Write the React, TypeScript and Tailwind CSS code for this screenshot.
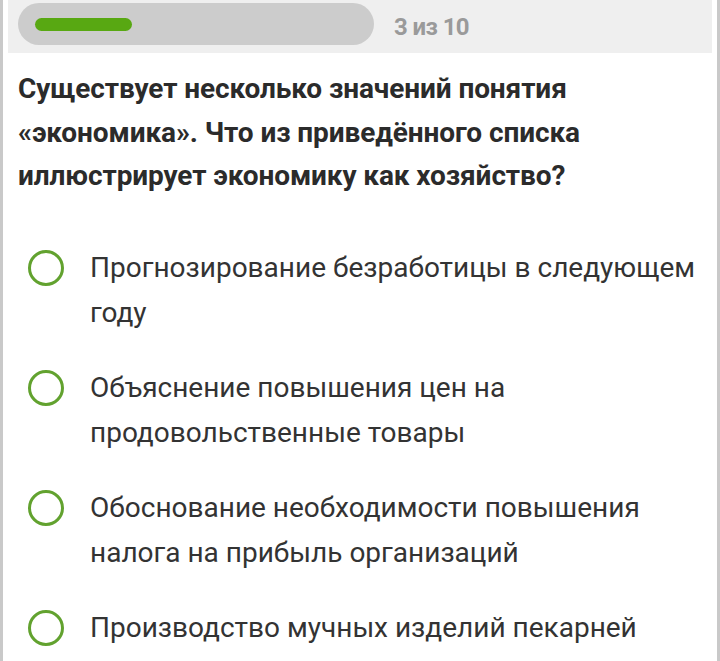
const options = [
  'Прогнозирование безработицы в следующем году',
  'Объяснение повышения цен на продовольственные товары',
  'Обоснование необходимости повышения налога на прибыль организаций',
  'Производство мучных изделий пекарней',
];

function Radio() {
  return (
    <span className="mt-[4px] block h-[36px] w-[36px] shrink-0 rounded-full border-[3px] border-[#62a22f]" />
  );
}

export default function App() {
  return (
    <div className="h-[661px] w-[720px] overflow-hidden bg-white font-['Roboto',sans-serif]">
      <div className="h-full border-l-[3px] border-r-[3px] border-[#c9c9c9] bg-white">
        {/* progress header */}
        <div className="mx-[5px] flex h-[53px] items-start bg-[#efefef] pt-[3px] pl-[10px]">
          <div className="flex h-[42px] w-[356px] items-center rounded-full bg-[#cccccc] pl-[17px]">
            <div className="h-[13px] w-[97px] rounded-full bg-[#58a812]" />
          </div>
          <span className="ml-[20px] mt-[6px] text-[24px] font-bold tracking-[-0.6px] text-[#9a9a9a]">
            3 из 10
          </span>
        </div>

        {/* question */}
        <h1 className="pl-[15px] pr-[20px] pt-[14px] text-[28px] font-bold leading-[43.5px] tracking-[-0.1px] text-[#2b2b2b]">
          Существует несколько значений понятия «экономика». Что из приведённого списка иллюстрирует экономику как хозяйство?
        </h1>

        {/* options */}
        <ul className="mt-[48px] flex flex-col gap-[31px] pl-[25px] pr-[4px]">
          {options.map((o) => (
            <li key={o} className="flex items-start gap-[26px]">
              <Radio />
              <span className="-mt-[1px] text-[28px] leading-[45px] text-[#333333]">{o}</span>
            </li>
          ))}
        </ul>
      </div>
    </div>
  );
}
